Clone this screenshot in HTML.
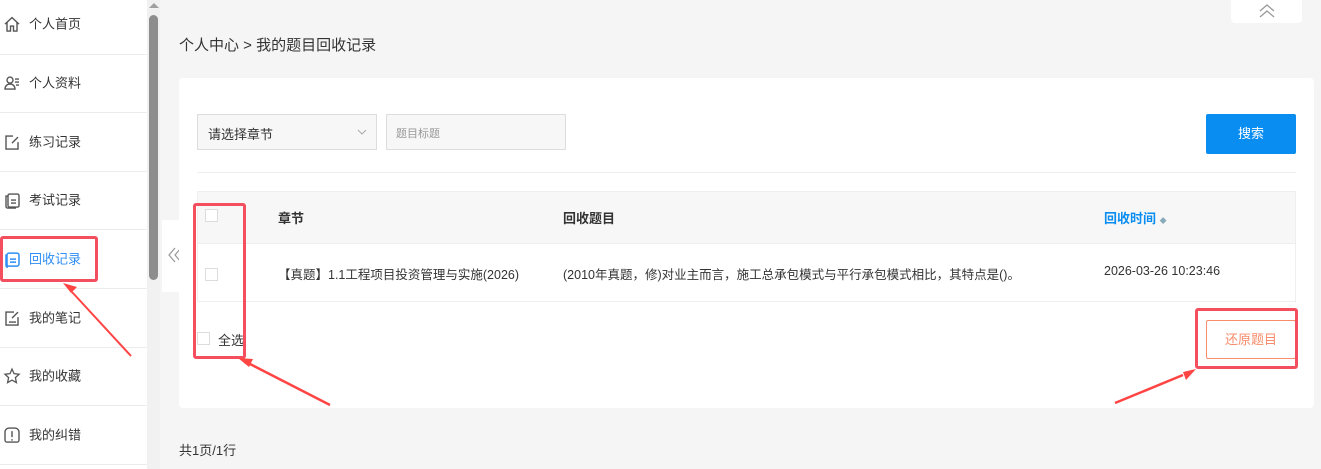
<!DOCTYPE html>
<html><head><meta charset="utf-8"><style>
*{margin:0;padding:0;box-sizing:border-box}
body{width:1321px;height:469px;overflow:hidden;background:#f5f5f5;font-family:"Liberation Sans","Noto Sans CJK SC",sans-serif;color:#333;position:relative;font-size:13px}
.a{position:absolute}
.side{left:0;top:0;width:147px;height:469px;background:#fff}
.item{position:absolute;left:0;width:147px;height:58px;border-bottom:1px solid #ececec;font-size:13px;color:#333}
.item span{position:absolute;left:29px;top:50%;transform:translateY(-60%)}
.item svg{position:absolute;left:3px;top:50%;transform:translateY(-55%)}
.cb{position:absolute;width:13px;height:13px;border:1px solid #ddd;background:#fff}
.red{position:absolute;border:3px solid #f44f5f;border-radius:3px}
</style></head><body>
<div class="a side">
 <div class="item" style="top:-4px;height:59px"><svg width="18" height="18" viewBox="0 0 18 18" fill="none" stroke="#555" stroke-width="1.4"><path d="M2 9L9 2.5 16 9M4 7.5V16h3.5v-5h3v5H14V7.5"/></svg><span>个人首页</span></div>
 <div class="item" style="top:55px"><svg width="18" height="18" viewBox="0 0 18 18" fill="none" stroke="#555" stroke-width="1.4"><circle cx="7" cy="6" r="3"/><path d="M2 15c0-3 2-5 5-5s5 2 5 5zM12 5h4M12 8h4M13 11h3"/></svg><span>个人资料</span></div>
 <div class="item" style="top:114px"><svg width="18" height="18" viewBox="0 0 18 18" fill="none" stroke="#555" stroke-width="1.4"><path d="M10 3H3v13h12V9M9 10l6-6"/></svg><span>练习记录</span></div>
 <div class="item" style="top:172px"><svg width="18" height="18" viewBox="0 0 18 18" fill="none" stroke="#555" stroke-width="1.4"><rect x="5" y="3" width="11" height="13" rx="1.5"/><path d="M5 5H3v10q0 2 2 2h8M8 9h5M8 12h5"/></svg><span>考试记录</span></div>
 <div class="item" style="top:231px"><svg width="18" height="18" viewBox="0 0 18 18" fill="none" stroke="#2f8ef4" stroke-width="1.5"><rect x="4" y="3" width="12" height="13" rx="2"/><path d="M4 5H3v10q0 2 2 2M7 9h6M7 12h6"/></svg><span style="color:#2f8ef4">回收记录</span></div>
 <div class="item" style="top:290px"><svg width="18" height="18" viewBox="0 0 18 18" fill="none" stroke="#555" stroke-width="1.4"><path d="M11 3H3v13h12V8M6 13h7M9 9l6-6"/></svg><span>我的笔记</span></div>
 <div class="item" style="top:348px"><svg width="18" height="18" viewBox="0 0 18 18" fill="none" stroke="#555" stroke-width="1.3"><path d="M9 2l2.1 4.6 5 .5-3.7 3.4 1 5L9 13l-4.4 2.5 1-5L2 7.1l5-.5z"/></svg><span>我的收藏</span></div>
 <div class="item" style="top:407px"><svg width="18" height="18" viewBox="0 0 18 18" fill="none" stroke="#555" stroke-width="1.4"><path d="M4 16h10a2 2 0 002-2V6a4 4 0 00-4-4H6a4 4 0 00-4 4v8a2 2 0 002 2z"/><path d="M9 5v6M9 13v1.5"/></svg><span>我的纠错</span></div>
</div>
<div class="a" style="left:147px;top:0;width:13px;height:469px;background:#f1f1f1"></div>
<div class="a" style="left:149px;top:3px;width:0;height:0;border-left:5px solid transparent;border-right:5px solid transparent;border-bottom:5px solid #a0a0a0"></div>
<div class="a" style="left:149px;top:15px;width:9px;height:265px;background:#8d8d8d;border-radius:5px"></div>
<div class="a" style="left:162px;top:220px;width:26px;height:72px;background:#fff;border-radius:0 4px 4px 0"><svg class="a" style="left:6px;top:27px" width="14" height="16" viewBox="0 0 14 16" fill="none" stroke="#999" stroke-width="1.2"><path d="M7 1L1 8l6 7M13 1L7 8l6 7"/></svg></div>
<div class="a" style="left:1231px;top:0;width:71px;height:23px;background:#fff;border-radius:0 0 4px 4px"><svg class="a" style="left:27px;top:3px" width="18" height="16" viewBox="0 0 18 16" fill="none" stroke="#999" stroke-width="1.3"><path d="M2 8l7-6 7 6M2 14l7-6 7 6"/></svg></div>
<div class="a" style="left:179px;top:34px;font-size:15px;color:#333">个人中心 &gt; 我的题目回收记录</div>
<div class="a" style="left:179px;top:78px;width:1135px;height:330px;background:#fff;border-radius:4px"></div>
<div class="a" style="left:197px;top:114px;width:180px;height:36px;background:#f7f7f7;border:1px solid #ddd;padding:9px 10px;font-size:13px">请选择章节<svg class="a" style="right:9px;top:14px" width="10" height="6" viewBox="0 0 10 6" fill="none" stroke="#aaa"><path d="M1 1l4 4 4-4"/></svg></div>
<div class="a" style="left:386px;top:114px;width:180px;height:36px;background:#f7f7f7;border:1px solid #ddd;padding:10px 9px;font-size:11px;color:#999">题目标题</div>
<div class="a" style="left:1206px;top:114px;width:90px;height:40px;background:#0a8df0;border-radius:2px;color:#fff;font-size:13px;text-align:center;line-height:40px">搜索</div>
<div class="a" style="left:197px;top:172px;width:1099px;height:1px;background:#eee"></div>
<div class="a" style="left:197px;top:191px;width:1099px;height:111px;border:1px solid #eee"></div>
<div class="a" style="left:198px;top:192px;width:1097px;height:52px;background:#f7f7f7;border-bottom:1px solid #eee"></div>
<div class="cb" style="left:205px;top:209px"></div>
<div class="a" style="left:278px;top:208px;font-weight:bold;font-size:13px">章节</div>
<div class="a" style="left:563px;top:208px;font-weight:bold;font-size:13px">回收题目</div>
<div class="a" style="left:1104px;top:208px;font-weight:bold;font-size:13px;color:#0a8df0">回收时间 <span style="font-size:7px;color:#8ab">◆</span></div>
<div class="cb" style="left:205px;top:268px"></div>
<div class="a" style="left:278px;top:264px;font-size:12.5px">【真题】1.1工程项目投资管理与实施(2026)</div>
<div class="a" style="left:563px;top:264px;font-size:12.5px">(2010年真题，修)对业主而言，施工总承包模式与平行承包模式相比，其特点是()。</div>
<div class="a" style="left:1104px;top:264px;font-size:12.5px">2026-03-26 10:23:46</div>
<div class="cb" style="left:197px;top:332px"></div>
<div class="a" style="left:218px;top:330px;font-size:13px">全选</div>
<div class="a" style="left:1206px;top:320px;width:90px;height:39px;border:1px solid #f98c6a;border-radius:2px;color:#f98c6a;font-size:13px;text-align:center;line-height:37px">还原题目</div>
<div class="a" style="left:179px;top:440px;font-size:13px">共1页/1行</div>
<div class="red" style="left:0;top:236px;width:98px;height:46px"></div>
<div class="red" style="left:193px;top:203px;width:53px;height:156px"></div>
<div class="red" style="left:1195px;top:308px;width:103px;height:61px"></div>
<svg class="a" style="left:0;top:0" width="1321" height="469">
<path d="M131 356L72 292" stroke="#f44" stroke-width="2"/><path d="M63 283l14 4-6 6z" fill="#f44"/>
<path d="M330 405L250 364" stroke="#f44" stroke-width="2.5"/><path d="M238 358l15 1-4 8z" fill="#f44"/>
<path d="M1115 403L1183 375" stroke="#f44" stroke-width="2.5"/><path d="M1196 369l-10 11-3-8z" fill="#f44"/>
</svg>
</body></html>
